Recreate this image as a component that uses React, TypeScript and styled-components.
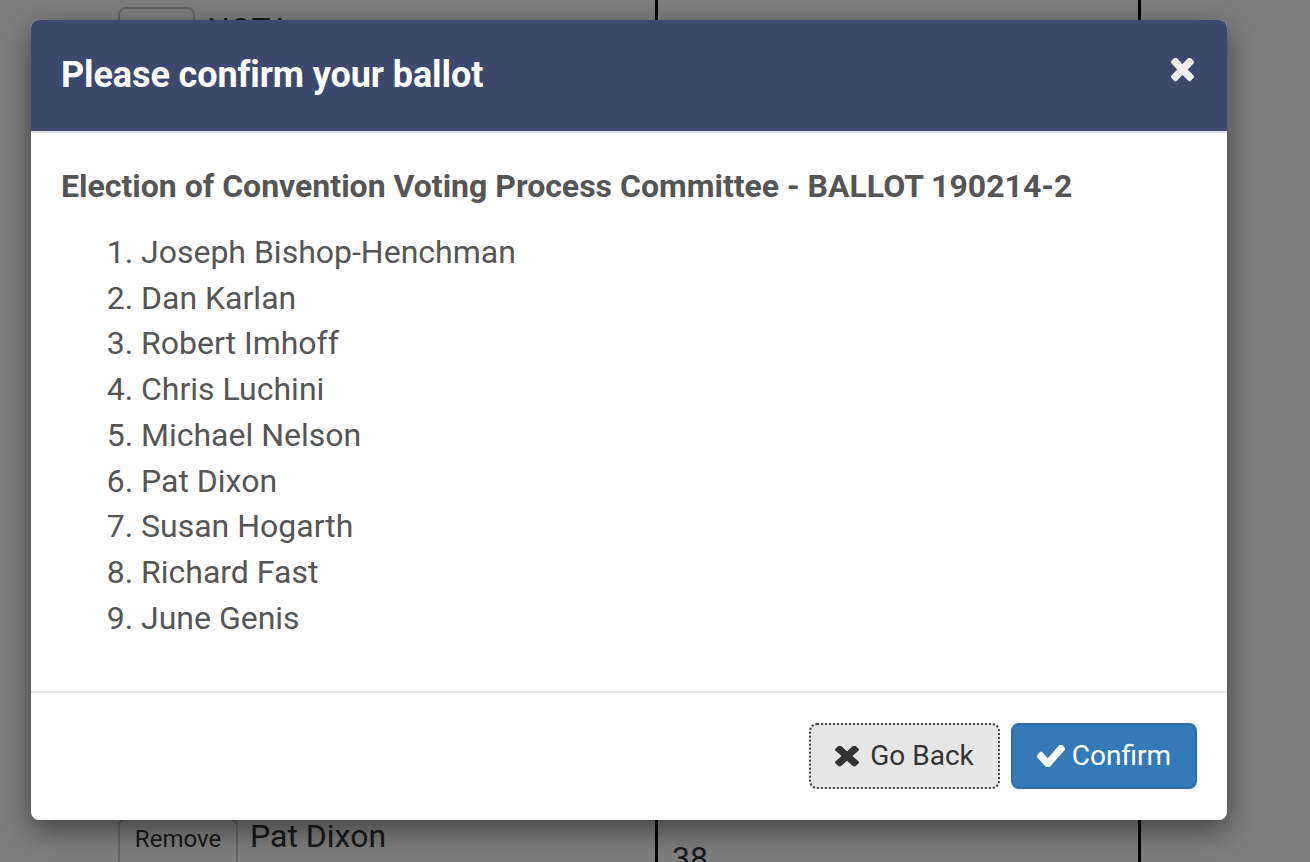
import React from "react";
import styled, { createGlobalStyle } from "styled-components";

const Global = createGlobalStyle`
  html, body { margin: 0; padding: 0; }
  body {
    font-family: Roboto, "Helvetica Neue", Arial, sans-serif;
    color: #333;
    background: #fff;
    overflow: hidden;
  }
  * { box-sizing: border-box; }
`;

const Page = styled.div`
  position: relative;
  width: 1310px;
  height: 862px;
  overflow: hidden;
  display: flex;
  background: #fff;
`;

const Cell = styled.div<{ $w: number; $border?: boolean }>`
  width: ${(p) => p.$w}px;
  flex: ${(p) => (p.$w ? "none" : "1")};
  height: 100%;
  border-right: ${(p) => (p.$border ? "3px solid #000" : "none")};
  display: flex;
  flex-direction: column;
`;

const Row = styled.div<{ $top: number }>`
  display: flex;
  align-items: flex-start;
  gap: 12px;
  margin-top: ${(p) => p.$top}px;
  padding-left: 118px;
`;

const SmallBtn = styled.div<{ $w: number; $h?: number }>`
  width: ${(p) => p.$w}px;
  height: ${(p) => p.$h ?? 60}px;
  border: 2px solid #ccc;
  border-radius: 8px;
  display: flex;
  justify-content: center;
  padding-top: 5px;
  font-size: 24px;
  line-height: 28px;
  color: #333;
  background: #fff;
`;

const Name = styled.span<{ $offset?: number }>`
  font-size: 32px;
  line-height: 36px;
  margin-top: ${(p) => p.$offset ?? 0}px;
  color: #333;
`;

const CellText = styled.div`
  margin-top: 842px;
  padding-left: 14px;
  font-size: 32px;
  color: #333;
  line-height: 1;
`;

const Overlay = styled.div`
  position: absolute;
  inset: 0;
  background: rgba(0, 0, 0, 0.5);
`;

const Modal = styled.div`
  position: absolute;
  left: 31px;
  top: 20px;
  width: 1196px;
  background: #fff;
  border-radius: 8px;
  box-shadow: 0 10px 30px rgba(0, 0, 0, 0.5);
  overflow: hidden;
`;

const Header = styled.div`
  background: #3c496d;
  padding: 30px 30px;
  border-bottom: 2px solid #dde0ea;
  display: flex;
  align-items: flex-start;
  justify-content: space-between;
`;

const Title = styled.h4`
  margin: 0;
  font-size: 36px;
  font-weight: 700;
  line-height: 51px;
  letter-spacing: -0.1px;
  color: #fff;
`;

const Close = styled.button`
  border: 0;
  background: transparent;
  padding: 0;
  margin-top: 8px;
  margin-right: 2px;
  width: 24px;
  height: 24px;
  display: flex;
  color: #eeeeee;
  cursor: pointer;
`;

const Body = styled.div`
  padding: 30px 30px;
`;

const Heading = styled.h5`
  margin: 6px 0 26px;
  font-size: 32px;
  line-height: 35px;
  font-weight: 700;
  color: #555;
`;

const List = styled.ol`
  margin: 0 0 20px;
  padding-left: 80px;
  font-size: 32px;
  line-height: 45.7px;
  color: #555;
`;

const Footer = styled.div`
  border-top: 2px solid #e5e5e5;
  padding: 30px 30px 31px;
  display: flex;
  justify-content: flex-end;
  gap: 11px;
`;

const Btn = styled.button<{ $primary?: boolean }>`
  font-family: Roboto, "Helvetica Neue", Arial, sans-serif;
  font-size: 28px;
  line-height: 40px;
  padding: 11px 24px;
  border-radius: 8px;
  display: flex;
  align-items: center;
  gap: ${(p) => (p.$primary ? "7px" : "11px")};
  cursor: pointer;
  background: ${(p) => (p.$primary ? "#337ab7" : "#e6e6e6")};
  color: ${(p) => (p.$primary ? "#fff" : "#333")};
  border: ${(p) => (p.$primary ? "2px solid #2e6da4" : "2px dotted #444")};
`;

const TIMES =
  "M1490 1322q0 40-28 68l-136 136q-28 28-68 28t-68-28l-294-294-294 294q-28 28-68 28t-68-28l-136-136q-28-28-28-68t28-68l294-294-294-294q-28-28-28-68t28-68l136-136q28-28 68-28t68 28l294 294 294-294q28-28 68-28t68 28l136 136q28 28 28 68t-28 68l-294 294 294 294q28 28 28 68z";

const TimesIcon = ({ w, h }: { w: number; h: number }) => (
  <svg width={w} height={h} viewBox="302 394 1188 1188" preserveAspectRatio="none" fill="currentColor">
    <path d={TIMES} />
  </svg>
);

const CheckIcon = () => (
  <svg width={28} height={22} viewBox="121 374 1550 1080" preserveAspectRatio="none" fill="currentColor">
    <path d="M1671 566q0 40-28 68l-724 724-136 136q-28 28-68 28t-68-28l-136-136-362-362q-28-28-28-68t28-68l136-136q28-28 68-28t68 28l294 295 656-657q28-28 68-28t68 28l136 136q28 28 28 68z" />
  </svg>
);

const names = [
  "Joseph Bishop-Henchman",
  "Dan Karlan",
  "Robert Imhoff",
  "Chris Luchini",
  "Michael Nelson",
  "Pat Dixon",
  "Susan Hogarth",
  "Richard Fast",
  "June Genis",
];

export default function App() {
  return (
    <>
      <Global />
      <Page>
        <Cell $w={658} $border>
          <Row $top={7}>
            <SmallBtn $w={77} $h={54} />
            <Name $offset={4}>NOTA</Name>
          </Row>
          <Row $top={757}>
            <SmallBtn $w={120}>Remove</SmallBtn>
            <Name>Pat Dixon</Name>
          </Row>
        </Cell>
        <Cell $w={483} $border>
          <CellText>38</CellText>
        </Cell>
        <Cell $w={0} />
        <Overlay />
        <Modal>
          <Header>
            <Title>Please confirm your ballot</Title>
            <Close aria-label="Close">
              <TimesIcon w={23} h={24} />
            </Close>
          </Header>
          <Body>
            <Heading>Election of Convention Voting Process Committee - BALLOT 190214-2</Heading>
            <List>
              {names.map((n) => (
                <li key={n}>{n}</li>
              ))}
            </List>
          </Body>
          <Footer>
            <Btn>
              <TimesIcon w={24} h={21} />
              Go Back
            </Btn>
            <Btn $primary>
              <CheckIcon />
              Confirm
            </Btn>
          </Footer>
        </Modal>
      </Page>
    </>
  );
}
